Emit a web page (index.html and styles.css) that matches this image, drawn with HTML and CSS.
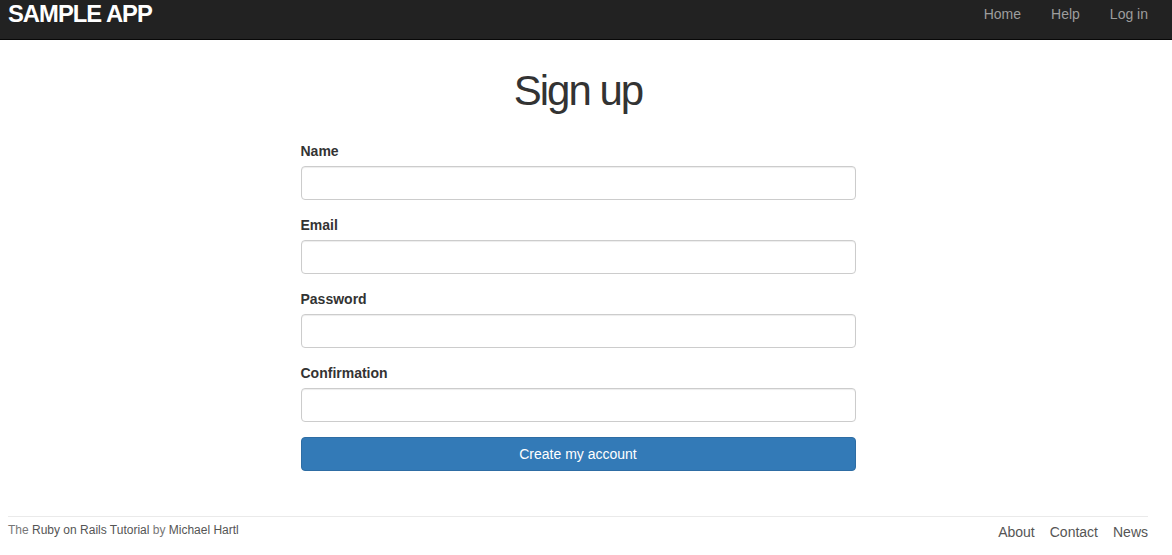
FILE: index.html
```html
<!DOCTYPE html>
<html>
<head>
<meta charset="utf-8">
<title>Sign up | Sample App</title>
<link rel="stylesheet" href="styles.css">
</head>
<body>
<header class="navbar">
  <div class="container nav-inner">
    <a class="logo" href="#">Sample App</a>
    <nav class="nav-links">
      <a href="#">Home</a>
      <a href="#">Help</a>
      <a href="#">Log in</a>
    </nav>
  </div>
</header>
<main class="container">
  <h1 class="title">Sign up</h1>
  <form class="signup-form">
    <label class="field-label" for="name">Name</label>
    <input class="field-input" id="name" type="text">
    <label class="field-label" for="email">Email</label>
    <input class="field-input" id="email" type="email">
    <label class="field-label" for="password">Password</label>
    <input class="field-input" id="password" type="password">
    <label class="field-label" for="confirmation">Confirmation</label>
    <input class="field-input" id="confirmation" type="password">
    <button class="btn-primary" type="button">Create my account</button>
  </form>
  <footer class="footer">
    <small class="credit">The <a href="#">Ruby on Rails Tutorial</a> by <a href="#">Michael Hartl</a></small>
    <nav class="footer-links">
      <a href="#">About</a>
      <a href="#">Contact</a>
      <a href="#">News</a>
    </nav>
  </footer>
</main>
</body>
</html>
```
FILE: styles.css
```css
* { box-sizing: border-box; }
html, body { margin: 0; padding: 0; }
body {
  font-family: "Liberation Sans", Arial, sans-serif;
  font-size: 14px;
  line-height: 20px;
  color: #333;
  background: #fff;
}
a { text-decoration: none; }
.container {
  width: 1140px;
  margin-left: 8px;
}
.navbar {
  background: #222;
  height: 40px;
  border-bottom: 1px solid #080808;
}
.nav-inner {
  display: flex;
  justify-content: space-between;
  align-items: flex-start;
  height: 39px;
}
.logo {
  color: #fff;
  font-size: 23.8px;
  font-weight: bold;
  letter-spacing: -1px;
  text-transform: uppercase;
  line-height: 28px;
  padding-top: 0;
}
.nav-links {
  display: flex;
  margin-right: -15px;
}
.nav-links a {
  color: #9d9d9d;
  padding: 4px 15px 0;
  line-height: 20px;
  font-size: 14px;
}
.title {
  font-size: 42px;
  font-weight: normal;
  letter-spacing: -2px;
  line-height: 46px;
  text-align: center;
  margin: 28px 0 27px;
  color: #333;
}
.signup-form {
  width: 555px;
  margin: 0 auto;
  display: flex;
  flex-direction: column;
}
.field-label {
  font-weight: bold;
  line-height: 20px;
  margin-bottom: 5px;
  color: #333;
}
.field-input {
  height: 34px;
  border: 1px solid #ccc;
  border-radius: 4px;
  margin: 0 0 15px;
  padding: 6px 12px;
  font-size: 14px;
  box-shadow: inset 0 1px 1px rgba(0,0,0,0.075);
}
.btn-primary {
  height: 34px;
  background: #337ab7;
  border: 1px solid #2e6da4;
  border-radius: 4px;
  color: #fff;
  font-family: "Liberation Sans", Arial, sans-serif;
  font-size: 14px;
  padding: 6px 12px;
}
.footer {
  margin-top: 45px;
  border-top: 1px solid #eaeaea;
  padding-top: 5px;
  color: #777;
  display: flex;
  justify-content: space-between;
  align-items: flex-start;
}
.credit {
  font-size: 12px;
  line-height: 17px;
}
.credit a { color: #555; }
.footer-links {
  display: flex;
  gap: 15px;
  line-height: 20px;
}
.footer-links a { color: #555; font-size: 14px; }
```
